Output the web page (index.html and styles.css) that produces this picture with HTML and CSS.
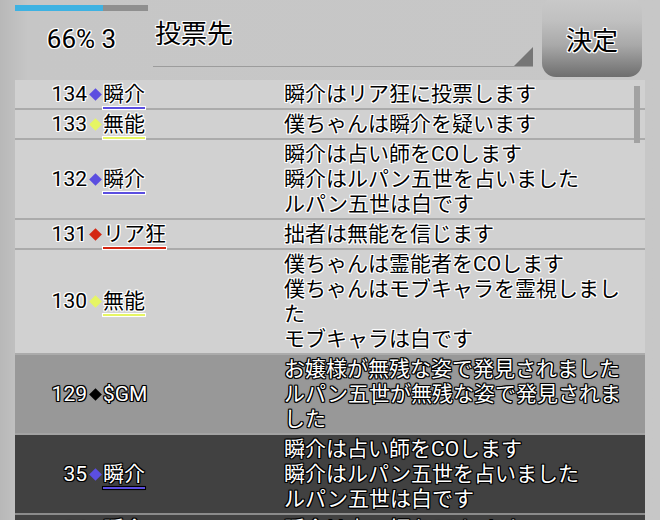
FILE: index.html
```html
<!DOCTYPE html>
<html lang="ja">
<head>
<meta charset="utf-8">
<link rel="stylesheet" href="styles.css">
</head>
<body>
<div class="screen">
  <header class="header">
    <div class="status">
      <div class="progress"><div class="progress-fill" style="width:66%"></div></div>
      <div class="status-text halo">66% 3</div>
    </div>
    <div class="spinner">
      <span class="spinner-text halo">投票先</span>
      <span class="spinner-arrow"></span>
    </div>
    <div class="decide"><span class="halo">決定</span></div>
  </header>

  <div class="log">
    <div class="scrollbar"></div>

    <div class="row">
      <div class="who"><span class="num">134</span><span class="dia c-blue"></span><span class="name u-blue">瞬介</span></div>
      <div class="msg">瞬介はリア狂に投票します</div>
    </div>
    <div class="row">
      <div class="who"><span class="num">133</span><span class="dia c-yellow"></span><span class="name u-yellow">無能</span></div>
      <div class="msg">僕ちゃんは瞬介を疑います</div>
    </div>
    <div class="row">
      <div class="who"><span class="num">132</span><span class="dia c-blue"></span><span class="name u-blue">瞬介</span></div>
      <div class="msg">瞬介は占い師をCOします<br>瞬介はルパン五世を占いました<br>ルパン五世は白です</div>
    </div>
    <div class="row">
      <div class="who"><span class="num">131</span><span class="dia c-red"></span><span class="name u-red">リア狂</span></div>
      <div class="msg">拙者は無能を信じます</div>
    </div>
    <div class="row">
      <div class="who"><span class="num">130</span><span class="dia c-yellow"></span><span class="name u-yellow">無能</span></div>
      <div class="msg">僕ちゃんは霊能者をCOします<br>僕ちゃんはモブキャラを霊視しまし<br>た<br>モブキャラは白です</div>
    </div>
    <div class="row row-gray">
      <div class="who"><span class="num">129</span><span class="dia c-black"></span><span class="name">$GM</span></div>
      <div class="msg">お嬢様が無残な姿で発見されました<br>ルパン五世が無残な姿で発見されま<br>した</div>
    </div>
    <div class="row row-dark">
      <div class="who"><span class="num">35</span><span class="dia c-blue"></span><span class="name u-blue">瞬介</span></div>
      <div class="msg">瞬介は占い師をCOします<br>瞬介はルパン五世を占いました<br>ルパン五世は白です</div>
    </div>
    <div class="row row-dark">
      <div class="who"><span class="num">34</span><span class="dia c-blue"></span><span class="name u-blue">瞬介</span></div>
      <div class="msg">瞬介は占い師をCOします</div>
    </div>
  </div>
</div>
</body>
</html>
```

FILE: styles.css
```css
html, body {
  margin: 0;
  padding: 0;
}

body {
  width: 660px;
  height: 520px;
  overflow: hidden;
  background: linear-gradient(to right, #b8b8b8 0px, #c6c6c6 28px, #c7c7c7 100%);
  font-family: Roboto, "Noto Sans CJK JP", sans-serif;
  color: #000;
}

.screen {
  width: 660px;
  height: 520px;
  display: flex;
  flex-direction: column;
}

.halo,
.row .who,
.row .msg {
  text-shadow:
    0 0 2px #fff,
    1px 0 0 #fff, -1px 0 0 #fff, 0 1px 0 #fff, 0 -1px 0 #fff,
    1px 1px 0 #fff, -1px -1px 0 #fff, 1px -1px 0 #fff, -1px 1px 0 #fff;
}

/* header */
.header {
  height: 80px;
  display: flex;
  padding-left: 15px;
  flex-shrink: 0;
}

.status {
  width: 133px;
  padding-top: 5px;
  display: flex;
  flex-direction: column;
}

.progress {
  height: 6px;
  background: #8f8f8f;
}

.progress-fill {
  height: 100%;
  background: #3eb2e2;
}

.status-text {
  margin-top: 13px;
  font-size: 26px;
  line-height: 30px;
  text-align: center;
}

.spinner {
  position: relative;
  margin-left: 5px;
  width: 380px;
  height: 67px;
  border-bottom: 1.5px solid #9c9c9c;
  box-sizing: border-box;
  padding-top: 19px;
  padding-left: 2px;
}

.spinner-text {
  font-size: 26px;
  line-height: 30px;
}

.spinner-arrow {
  position: absolute;
  right: 0;
  bottom: 0;
  width: 19px;
  height: 19px;
  background: #767676;
  clip-path: polygon(100% 0, 100% 100%, 0 100%);
}

.decide {
  margin-left: 9px;
  margin-top: -3px;
  width: 100px;
  height: 80px;
  border-radius: 14px;
  background: linear-gradient(to bottom, #cacaca 0%, #c0c0c0 30%, #a9a9a9 60%, #6e6e6e 100%);
  display: flex;
  align-items: center;
  justify-content: center;
  font-size: 26px;
  padding-top: 3px;
  box-sizing: border-box;
}

/* log */
.log {
  position: relative;
  margin-left: 15px;
  width: 630px;
  flex: 1;
  background: #d1d1d1;
  overflow: hidden;
}

.scrollbar {
  position: absolute;
  left: 619px;
  top: 6px;
  width: 6px;
  height: 57px;
  background: #a2a2a2;
}

.row {
  display: flex;
  padding: 1.5px 0 1.5px;
  border-bottom: 2px solid #ababab;
  font-size: 21px;
  line-height: 25px;
}

.who {
  width: 269px;
  flex-shrink: 0;
  display: flex;
  align-items: center;
}

.num {
  width: 72px;
  text-align: right;
}

.dia {
  width: 16px;
  height: 14px;
  display: flex;
  align-items: center;
  justify-content: center;
}

.dia::before {
  content: "";
  width: 9px;
  height: 9px;
  transform: rotate(45deg);
  background: currentColor;
}

.name {
  text-decoration-line: none;
}

.u-blue,
.u-yellow,
.u-red {
  text-decoration-line: underline;
  text-decoration-thickness: 2px;
  text-underline-offset: 6px;
  text-decoration-skip-ink: none;
}

.c-blue { color: #5b4ee0; }
.c-yellow { color: #e6f563; }
.c-red { color: #d42612; }
.c-black { color: #000; }

.u-blue { text-decoration-color: #5b4ee0; }
.u-yellow { text-decoration-color: #e6f563; }
.u-red { text-decoration-color: #d42612; }

.msg {
  flex: 1;
  white-space: nowrap;
}

.row-gray {
  background: #989898;
  border-bottom-color: #a3a3a3;
}

.row-dark {
  background: #414141;
  border-bottom-color: #8b8b8b;
}

.row-gray .num, .row-gray .name, .row-gray .msg,
.row-dark .num, .row-dark .name, .row-dark .msg {
  color: #fff;
}

.row-gray .who, .row-gray .msg,
.row-dark .who, .row-dark .msg {
  text-shadow:
    0 0 2px #000,
    1px 0 0 #000, -1px 0 0 #000, 0 1px 0 #000, 0 -1px 0 #000,
    1px 1px 0 #000, -1px -1px 0 #000, 1px -1px 0 #000, -1px 1px 0 #000;
}
```
